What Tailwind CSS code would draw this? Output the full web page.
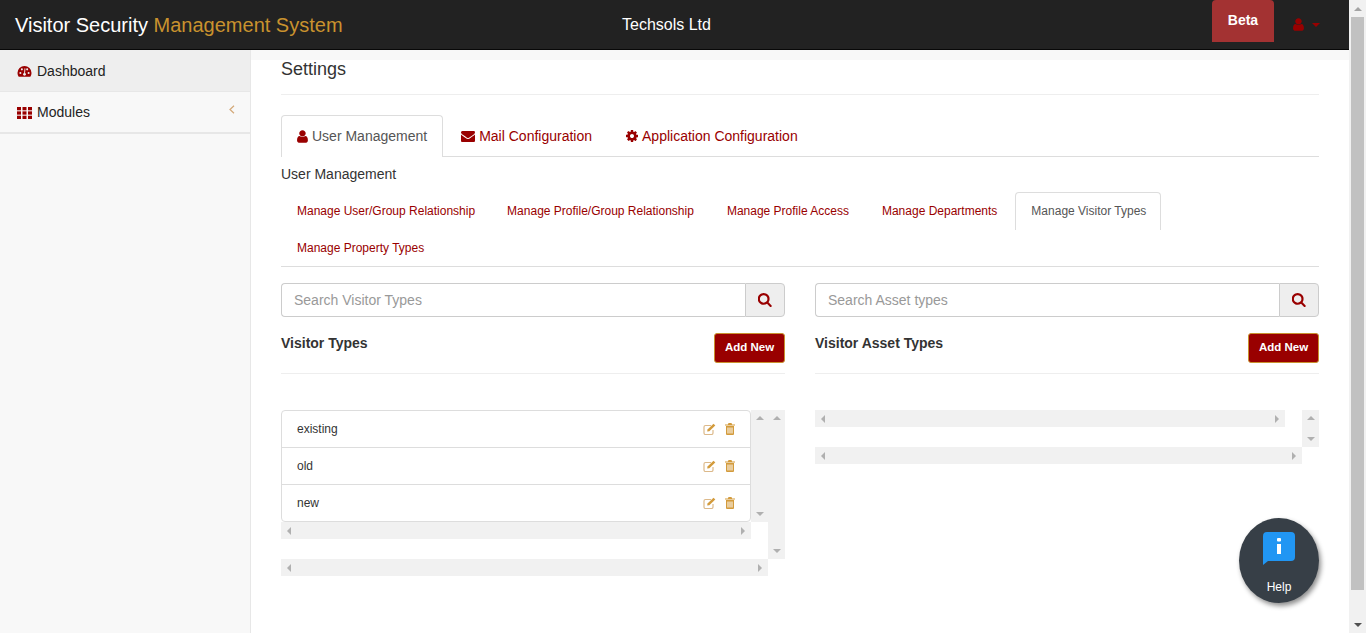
<!DOCTYPE html>
<html lang="en">
  <head>
    <meta charset="UTF-8" />
    <meta name="viewport" content="width=device-width, initial-scale=1.0" />
    <title>Settings</title>
    <script src="https://cdn.jsdelivr.net/npm/@tailwindcss/browser@4"></script>
  </head>
  <body class="overflow-hidden">
    <div class="relative flex h-[633px] w-[1366px] overflow-hidden bg-white font-['Liberation_Sans',Arial,sans-serif] text-[#333]">
      <div class="flex w-[1349px] flex-col">
        <!-- top bar -->
        <header class="flex h-[50px] shrink-0 items-start border-b border-[#080808] bg-[#222]">
          <div class="w-[622px] pl-[15px] pt-[12px] text-[20px] leading-[26px] text-white">Visitor Security <span class="text-[#c9922e]">Management System</span></div>
          <div class="w-[590px] pt-[15px] text-[16px] leading-[20px] text-white">Techsols Ltd</div>
          <div class="flex h-[42px] w-[62px] items-center justify-center rounded-t-[4px] bg-[#a33232] pb-[2px] text-[14px] font-bold text-white">Beta</div>
          <div class="flex items-center gap-[8px] pl-[19px] pt-[18px]">
            <svg class="h-[13px] w-[11px] fill-[#990000]" viewBox="250 100 1300 1600" preserveAspectRatio="none"><path d="M1536 1399q0 109-62.5 187t-150.5 78h-854q-88 0-150.5-78t-62.5-187q0-85 8.5-160.5t31.5-152 58.5-131 94-89 134.5-34.5q131 128 313 128t313-128q76 0 134.5 34.5t94 89 58.5 131 31.5 152 8.5 160.5zm-256-887q0 159-112.5 271.5t-271.5 112.5-271.5-112.5-112.5-271.5 112.5-271.5 271.5-112.5 271.5 112.5 112.5 271.5z"/></svg>
            <span class="h-0 w-0 border-x-[4px] border-t-[4px] border-x-transparent border-t-[#990000]"></span>
          </div>
        </header>
        <div class="flex min-h-0 flex-1">
          <!-- sidebar -->
          <aside class="w-[251px] shrink-0 border-r border-[#e7e7e7] bg-[#f8f8f8] text-[14px] text-[#222]">
            <div class="flex h-[42px] items-center gap-[5px] border-b border-[#e7e7e7] bg-[#eee] pl-[17px] pt-[2px]">
              <svg class="h-[15px] w-[15px] fill-[#990000]" viewBox="0 0 16 16"><path d="M8 2a7.5 7.5 0 0 0-7.5 7.5c0 1.6.5 3 1.3 4.2h12.4c.8-1.2 1.3-2.600 1.300-4.200A7.500 7.500 0 0 0 8 2z"/><circle cx="3.600" cy="9.500" r="1.100" fill="#eee"/><circle cx="5.200" cy="5.700" r="1.100" fill="#eee"/><circle cx="10.800" cy="5.700" r="1.100" fill="#eee"/><circle cx="12.400" cy="9.500" r="1.100" fill="#eee"/><circle cx="8" cy="11" r="1.500" fill="#eee"/><path d="M7.500 11 8 4.500l1 .2L8.500 11z" fill="#eee"/></svg>
              <span>Dashboard</span>
            </div>
            <div class="flex h-[42px] items-center gap-[5px] border-b-2 border-[#e7e7e7] pl-[17px] pt-[1px]">
              <svg class="h-[12px] w-[15px] fill-[#990000]" viewBox="0 0 15 12"><rect width="4" height="3.300"/><rect x="5.500" width="4" height="3.300"/><rect x="11" width="4" height="3.300"/><rect y="4.350" width="4" height="3.300"/><rect x="5.500" y="4.350" width="4" height="3.300"/><rect x="11" y="4.350" width="4" height="3.300"/><rect y="8.700" width="4" height="3.300"/><rect x="5.500" y="8.700" width="4" height="3.300"/><rect x="11" y="8.700" width="4" height="3.300"/></svg>
              <span class="flex-1">Modules</span>
              <svg class="mr-[15px] mb-[6px] h-[9px] w-[6px] fill-none stroke-[#d3a878] stroke-[1.200]" viewBox="0 0 6 9"><path d="M5 .8 1 4.500 5 8.200"/></svg>
            </div>
          </aside>
          <!-- main -->
          <main class="min-w-0 flex-1">
            <div class="h-[10px] bg-[#f8f8f8]"></div>
            <div class="pl-[30px] pr-[30px]">
              <h1 class="h-[35px] border-b border-[#eee] text-[18px] leading-[18px] text-[#333]">Settings</h1>
              <!-- main tabs -->
              <div class="mt-[20px] flex h-[42px] border-b border-[#ddd] text-[14px] text-[#990000]">
                <div class="flex h-[42px] items-center gap-[4px] rounded-t-[4px] border border-b-0 border-[#ddd] bg-white px-[15px] text-[#555]">
                  <svg class="h-[13px] w-[11px] fill-[#990000]" viewBox="250 100 1300 1600" preserveAspectRatio="none"><path d="M1536 1399q0 109-62.5 187t-150.5 78h-854q-88 0-150.5-78t-62.5-187q0-85 8.5-160.5t31.5-152 58.5-131 94-89 134.5-34.5q131 128 313 128t313-128q76 0 134.5 34.5t94 89 58.5 131 31.5 152 8.5 160.5zm-256-887q0 159-112.5 271.5t-271.5 112.5-271.5-112.5-112.5-271.5 112.5-271.5 271.5-112.5 271.5 112.5 112.5 271.5z"/></svg>
                  User Management
                </div>
                <div class="flex h-[42px] items-center gap-[4px] pl-[18px] pr-[15px]">
                  <svg class="h-[14px] w-[14px] fill-[#990000]" viewBox="0 0 1792 1792"><path d="M1792 710v794q0 66-47 113t-113 47h-1472q-66 0-113-47t-47-113v-794q44 49 101 87 362 246 497 345 57 42 92.500 65.500t94.500 48 110 24.500h2q51 0 110-24.500t94.500-48 92.500-65.500q170-123 498-345 57-39 100-87zm0-294q0 79-49 151t-122 123q-376 261-468 325-10 7-42.500 30.500t-54 38-52 32.500-57.500 27-50 9h-2q-23 0-50-9t-57.500-27-52-32.500-54-38-42.500-30.500q-91-64-262-182.500t-205-142.500q-62-42-117-115.500t-55-136.500q0-78 41.500-130t118.500-52h1472q65 0 112.500 47t47.500 113z"/></svg>
                  Mail Configuration
                </div>
                <div class="flex h-[42px] items-center gap-[4px] px-[19px]">
                  <svg class="h-[12px] w-[12px] fill-[#990000]" viewBox="128 128 1536 1536"><path d="M1152 896q0-106-75-181t-181-75-181 75-75 181 75 181 181 75 181-75 75-181zm512-109v222q0 12-8 23t-20 13l-185 28q-19 54-39 91 35 50 107 138 10 12 10 25t-9 23q-27 37-99 108t-94 71q-12 0-26-9l-138-108q-44 23-91 38-16 136-29 186-7 28-36 28h-222q-14 0-24.500-8.500t-11.500-21.500l-28-184q-49-16-90-37l-141 107q-10 9-25 9-14 0-25-11-126-114-165-168-7-10-7-23 0-12 8-23 15-21 51-66.500t54-70.500q-27-50-41-99l-183-27q-13-2-21-12.500t-8-23.500v-222q0-12 8-23t19-13l186-28q14-46 39-92-40-57-107-138-10-12-10-24 0-10 9-23 26-36 98.500-107.500t94.500-71.500q13 0 26 10l138 107q44-23 91-38 16-136 29-186 7-28 36-28h222q14 0 24.500 8.500t11.500 21.500l28 184q49 16 90 37l142-107q9-9 24-9 13 0 25 10 129 119 165 170 7 8 7 22 0 12-8 23-15 21-51 66.500t-54 70.500q26 50 41 98l183 28q13 2 21 12.500t8 23.500z"/></svg>
                  Application Configuration
                </div>
              </div>
              <div class="pt-[9px] text-[14px] leading-[17px] text-[#333]">User Management</div>
              <!-- sub tabs -->
              <div class="mt-[9px] flex flex-wrap border-b border-[#ddd] text-[12px] text-[#990000]">
                <div class="ml-[1px] mr-[2px] flex h-[37px] items-center px-[15px] pt-[1px]">Manage User/Group Relationship</div>
                <div class="mr-[3px] flex h-[37px] items-center px-[15px] pt-[1px]">Manage Profile/Group Relationship</div>
                <div class="mr-[3px] flex h-[37px] items-center px-[15px] pt-[1px]">Manage Profile Access</div>
                <div class="mr-[3px] flex h-[37px] items-center px-[15px] pt-[1px]">Manage Departments</div>
                <div class="flex h-[38px] w-[146px] items-center whitespace-nowrap rounded-t-[4px] border border-b-0 border-[#ddd] bg-white pb-[1px] pl-[15px] text-[#555]">Manage Visitor Types</div>
                <div class="flex h-[36px] w-full items-center pb-[1px] pl-[16px]">Manage Property Types</div>
              </div>
              <!-- two panels -->
              <div class="mt-[16px] flex gap-[30px]">
                <section class="w-[504px]">
                  <div class="flex h-[34px]">
                    <input class="h-full min-w-0 flex-1 rounded-l-[4px] border border-r-0 border-[#ccc] px-[12px] text-[14px] placeholder:text-[#999]" placeholder="Search Visitor Types" />
                    <div class="flex w-[40px] items-center justify-center rounded-r-[4px] border border-[#ccc] bg-[#eee]">
                      <svg class="h-[14px] w-[14px] fill-[#990000]" viewBox="128 128 1600 1664"><path d="M1216 832q0-185-131.500-316.500t-316.500-131.500-316.500 131.500-131.500 316.500 131.500 316.500 316.500 131.500 316.500-131.500 131.500-316.500zm512 832q0 52-38 90t-90 38q-54 0-90-38l-343-342q-179 124-399 124-143 0-273.500-55.500t-225-150-150-225-55.500-273.500 55.500-273.500 150-225 225-150 273.500-55.500 273.500 55.500 225 150 150 225 55.500 273.500q0 220-124 399l343 343q37 37 37 90z"/></svg>
                    </div>
                  </div>
                  <div class="mt-[16px] flex h-[41px] items-start justify-between border-b border-[#eee]">
                    <div class="pt-[2px] text-[14px] font-bold leading-[16px]">Visitor Types</div>
                    <div class="flex h-[30px] w-[71px] items-center justify-center rounded-[3px] border border-[#c9922e] bg-[#990000] text-[11.5px] font-bold text-white">Add New</div>
                  </div>
                  <div class="mt-[36px] flex items-start">
                    <div class="w-[487px]">
                      <div class="flex items-start">
                        <ul class="w-[470px] rounded-[4px] border border-[#ddd] text-[12px] text-[#333]">
                          <li class="flex h-[37px] items-center justify-between border-b border-[#ddd] pb-[1px] pl-[15px] pr-[15px]">existing
                            <span class="flex gap-[9px]">
                              <svg class="h-[12px] w-[13px]" viewBox="0 0 13 12"><path d="M10 7v3a1.500 1.500 0 0 1-1.500 1.500h-6A1.500 1.500 0 0 1 1 10V4a1.500 1.500 0 0 1 1.500-1.500H8" fill="none" stroke="#dcb98a" stroke-width="1.200"/><path d="M4.500 6.500 10.500.8l1.800 1.800L6.300 8.300l-2.100.3z" fill="#d39b3c"/></svg>
                              <svg class="h-[12px] w-[10px] fill-[#d39b3c]" viewBox="0 0 10 12"><path d="M3.500 0h3l.6 1.500H10v1H0v-1h2.900zM1 3h8v8a1 1 0 0 1-1 1H2a1 1 0 0 1-1-1zm1.500 1.500V10.500h1V4.500zm2 0V10.500h1V4.500zm2 0V10.500h1V4.500z"/></svg>
                            </span>
                          </li>
                          <li class="flex h-[37px] items-center justify-between border-b border-[#ddd] pb-[1px] pl-[15px] pr-[15px]">old
                            <span class="flex gap-[9px]">
                              <svg class="h-[12px] w-[13px]" viewBox="0 0 13 12"><path d="M10 7v3a1.500 1.500 0 0 1-1.500 1.500h-6A1.500 1.500 0 0 1 1 10V4a1.500 1.500 0 0 1 1.500-1.500H8" fill="none" stroke="#dcb98a" stroke-width="1.200"/><path d="M4.500 6.500 10.500.8l1.800 1.800L6.300 8.300l-2.100.3z" fill="#d39b3c"/></svg>
                              <svg class="h-[12px] w-[10px] fill-[#d39b3c]" viewBox="0 0 10 12"><path d="M3.500 0h3l.6 1.500H10v1H0v-1h2.900zM1 3h8v8a1 1 0 0 1-1 1H2a1 1 0 0 1-1-1zm1.500 1.500V10.500h1V4.500zm2 0V10.500h1V4.500zm2 0V10.500h1V4.500z"/></svg>
                            </span>
                          </li>
                          <li class="flex h-[36px] items-center justify-between pl-[15px] pr-[15px]">new
                            <span class="flex gap-[9px]">
                              <svg class="h-[12px] w-[13px]" viewBox="0 0 13 12"><path d="M10 7v3a1.500 1.500 0 0 1-1.500 1.500h-6A1.500 1.500 0 0 1 1 10V4a1.500 1.500 0 0 1 1.500-1.500H8" fill="none" stroke="#dcb98a" stroke-width="1.200"/><path d="M4.500 6.500 10.500.8l1.800 1.800L6.300 8.300l-2.100.3z" fill="#d39b3c"/></svg>
                              <svg class="h-[12px] w-[10px] fill-[#d39b3c]" viewBox="0 0 10 12"><path d="M3.500 0h3l.6 1.500H10v1H0v-1h2.900zM1 3h8v8a1 1 0 0 1-1 1H2a1 1 0 0 1-1-1zm1.500 1.500V10.500h1V4.500zm2 0V10.500h1V4.500zm2 0V10.500h1V4.500z"/></svg>
                            </span>
                          </li>
                        </ul>
                        <!-- inner vertical scrollbar -->
                        <div class="flex h-[112px] w-[17px] flex-col items-center justify-between bg-[#f1f1f1] py-[6px]">
                          <span class="h-0 w-0 border-x-[4px] border-b-[4px] border-x-transparent border-b-[#b0b0b0]"></span>
                          <span class="h-0 w-0 border-x-[4px] border-t-[4px] border-x-transparent border-t-[#b0b0b0]"></span>
                        </div>
                      </div>
                      <div class="flex h-[17px] w-[470px] items-center justify-between bg-[#f1f1f1] px-[6px]">
                        <span class="h-0 w-0 border-y-[4px] border-r-[4px] border-y-transparent border-r-[#b0b0b0]"></span>
                        <span class="h-0 w-0 border-y-[4px] border-l-[4px] border-y-transparent border-l-[#b0b0b0]"></span>
                      </div>
                      <div class="mt-[20px] flex h-[17px] items-center justify-between bg-[#f1f1f1] px-[6px]">
                        <span class="h-0 w-0 border-y-[4px] border-r-[4px] border-y-transparent border-r-[#b0b0b0]"></span>
                        <span class="h-0 w-0 border-y-[4px] border-l-[4px] border-y-transparent border-l-[#b0b0b0]"></span>
                      </div>
                    </div>
                    <!-- outer vertical scrollbar -->
                    <div class="flex h-[149px] w-[17px] flex-col items-center justify-between bg-[#f1f1f1] py-[6px]">
                      <span class="h-0 w-0 border-x-[4px] border-b-[4px] border-x-transparent border-b-[#b0b0b0]"></span>
                      <span class="h-0 w-0 border-x-[4px] border-t-[4px] border-x-transparent border-t-[#b0b0b0]"></span>
                    </div>
                  </div>
                </section>
                <section class="w-[504px]">
                  <div class="flex h-[34px]">
                    <input class="h-full min-w-0 flex-1 rounded-l-[4px] border border-r-0 border-[#ccc] px-[12px] text-[14px] placeholder:text-[#999]" placeholder="Search Asset types" />
                    <div class="flex w-[40px] items-center justify-center rounded-r-[4px] border border-[#ccc] bg-[#eee]">
                      <svg class="h-[14px] w-[14px] fill-[#990000]" viewBox="128 128 1600 1664"><path d="M1216 832q0-185-131.500-316.500t-316.500-131.500-316.500 131.500-131.500 316.500 131.500 316.500 316.500 131.500 316.500-131.500 131.500-316.500zm512 832q0 52-38 90t-90 38q-54 0-90-38l-343-342q-179 124-399 124-143 0-273.500-55.500t-225-150-150-225-55.500-273.500 55.500-273.500 150-225 225-150 273.500-55.500 273.500 55.500 225 150 150 225 55.500 273.500q0 220-124 399l343 343q37 37 37 90z"/></svg>
                    </div>
                  </div>
                  <div class="mt-[16px] flex h-[41px] items-start justify-between border-b border-[#eee]">
                    <div class="pt-[2px] text-[14px] font-bold leading-[16px]">Visitor Asset Types</div>
                    <div class="flex h-[30px] w-[71px] items-center justify-center rounded-[3px] border border-[#c9922e] bg-[#990000] text-[11.5px] font-bold text-white">Add New</div>
                  </div>
                  <div class="mt-[36px] flex items-start">
                    <div class="w-[487px]">
                      <div class="flex h-[17px] w-[470px] items-center justify-between bg-[#f1f1f1] px-[6px]">
                        <span class="h-0 w-0 border-y-[4px] border-r-[4px] border-y-transparent border-r-[#b0b0b0]"></span>
                        <span class="h-0 w-0 border-y-[4px] border-l-[4px] border-y-transparent border-l-[#b0b0b0]"></span>
                      </div>
                      <div class="mt-[20px] flex h-[17px] items-center justify-between bg-[#f1f1f1] px-[6px]">
                        <span class="h-0 w-0 border-y-[4px] border-r-[4px] border-y-transparent border-r-[#b0b0b0]"></span>
                        <span class="h-0 w-0 border-y-[4px] border-l-[4px] border-y-transparent border-l-[#b0b0b0]"></span>
                      </div>
                    </div>
                    <div class="flex h-[37px] w-[17px] flex-col items-center justify-between bg-[#f1f1f1] py-[6px]">
                      <span class="h-0 w-0 border-x-[4px] border-b-[4px] border-x-transparent border-b-[#b0b0b0]"></span>
                      <span class="h-0 w-0 border-x-[4px] border-t-[4px] border-x-transparent border-t-[#b0b0b0]"></span>
                    </div>
                  </div>
                </section>
              </div>
            </div>
          </main>
        </div>
      </div>
      <!-- page scrollbar -->
      <div class="flex w-[17px] shrink-0 flex-col items-center bg-[#f1f1f1]">
        <div class="flex h-[17px] items-center"><span class="h-0 w-0 border-x-[4px] border-b-[4px] border-x-transparent border-b-[#a3a3a3]"></span></div>
        <div class="h-[573px] w-[13px] bg-[#c1c1c1]"></div>
        <div class="flex flex-1 items-end pb-[6px]"><span class="h-0 w-0 border-x-[4px] border-t-[4px] border-x-transparent border-t-[#505050]"></span></div>
      </div>
      <!-- help button -->
      <div class="absolute left-[1239px] top-[518px] flex h-[85px] w-[80px] flex-col items-center rounded-[50%] bg-[#373f47] pt-[14px] shadow-[2px_3px_5px_rgba(0,0,0,0.45)]">
        <svg class="h-[33px] w-[32px]" viewBox="0 0 32 33"><path d="M4 0h24a4 4 0 0 1 4 4v21a4 4 0 0 1-4 4H5l-5 4V4a4 4 0 0 1 4-4z" fill="#2196f3"/><rect x="14" y="6" width="4" height="3.500" rx="1" fill="#fff"/><rect x="14" y="12" width="4" height="10" fill="#fff"/></svg>
        <span class="mt-[15px] text-[12px] font-normal leading-[14px] text-white">Help</span>
      </div>
    </div>
  </body>
</html>
